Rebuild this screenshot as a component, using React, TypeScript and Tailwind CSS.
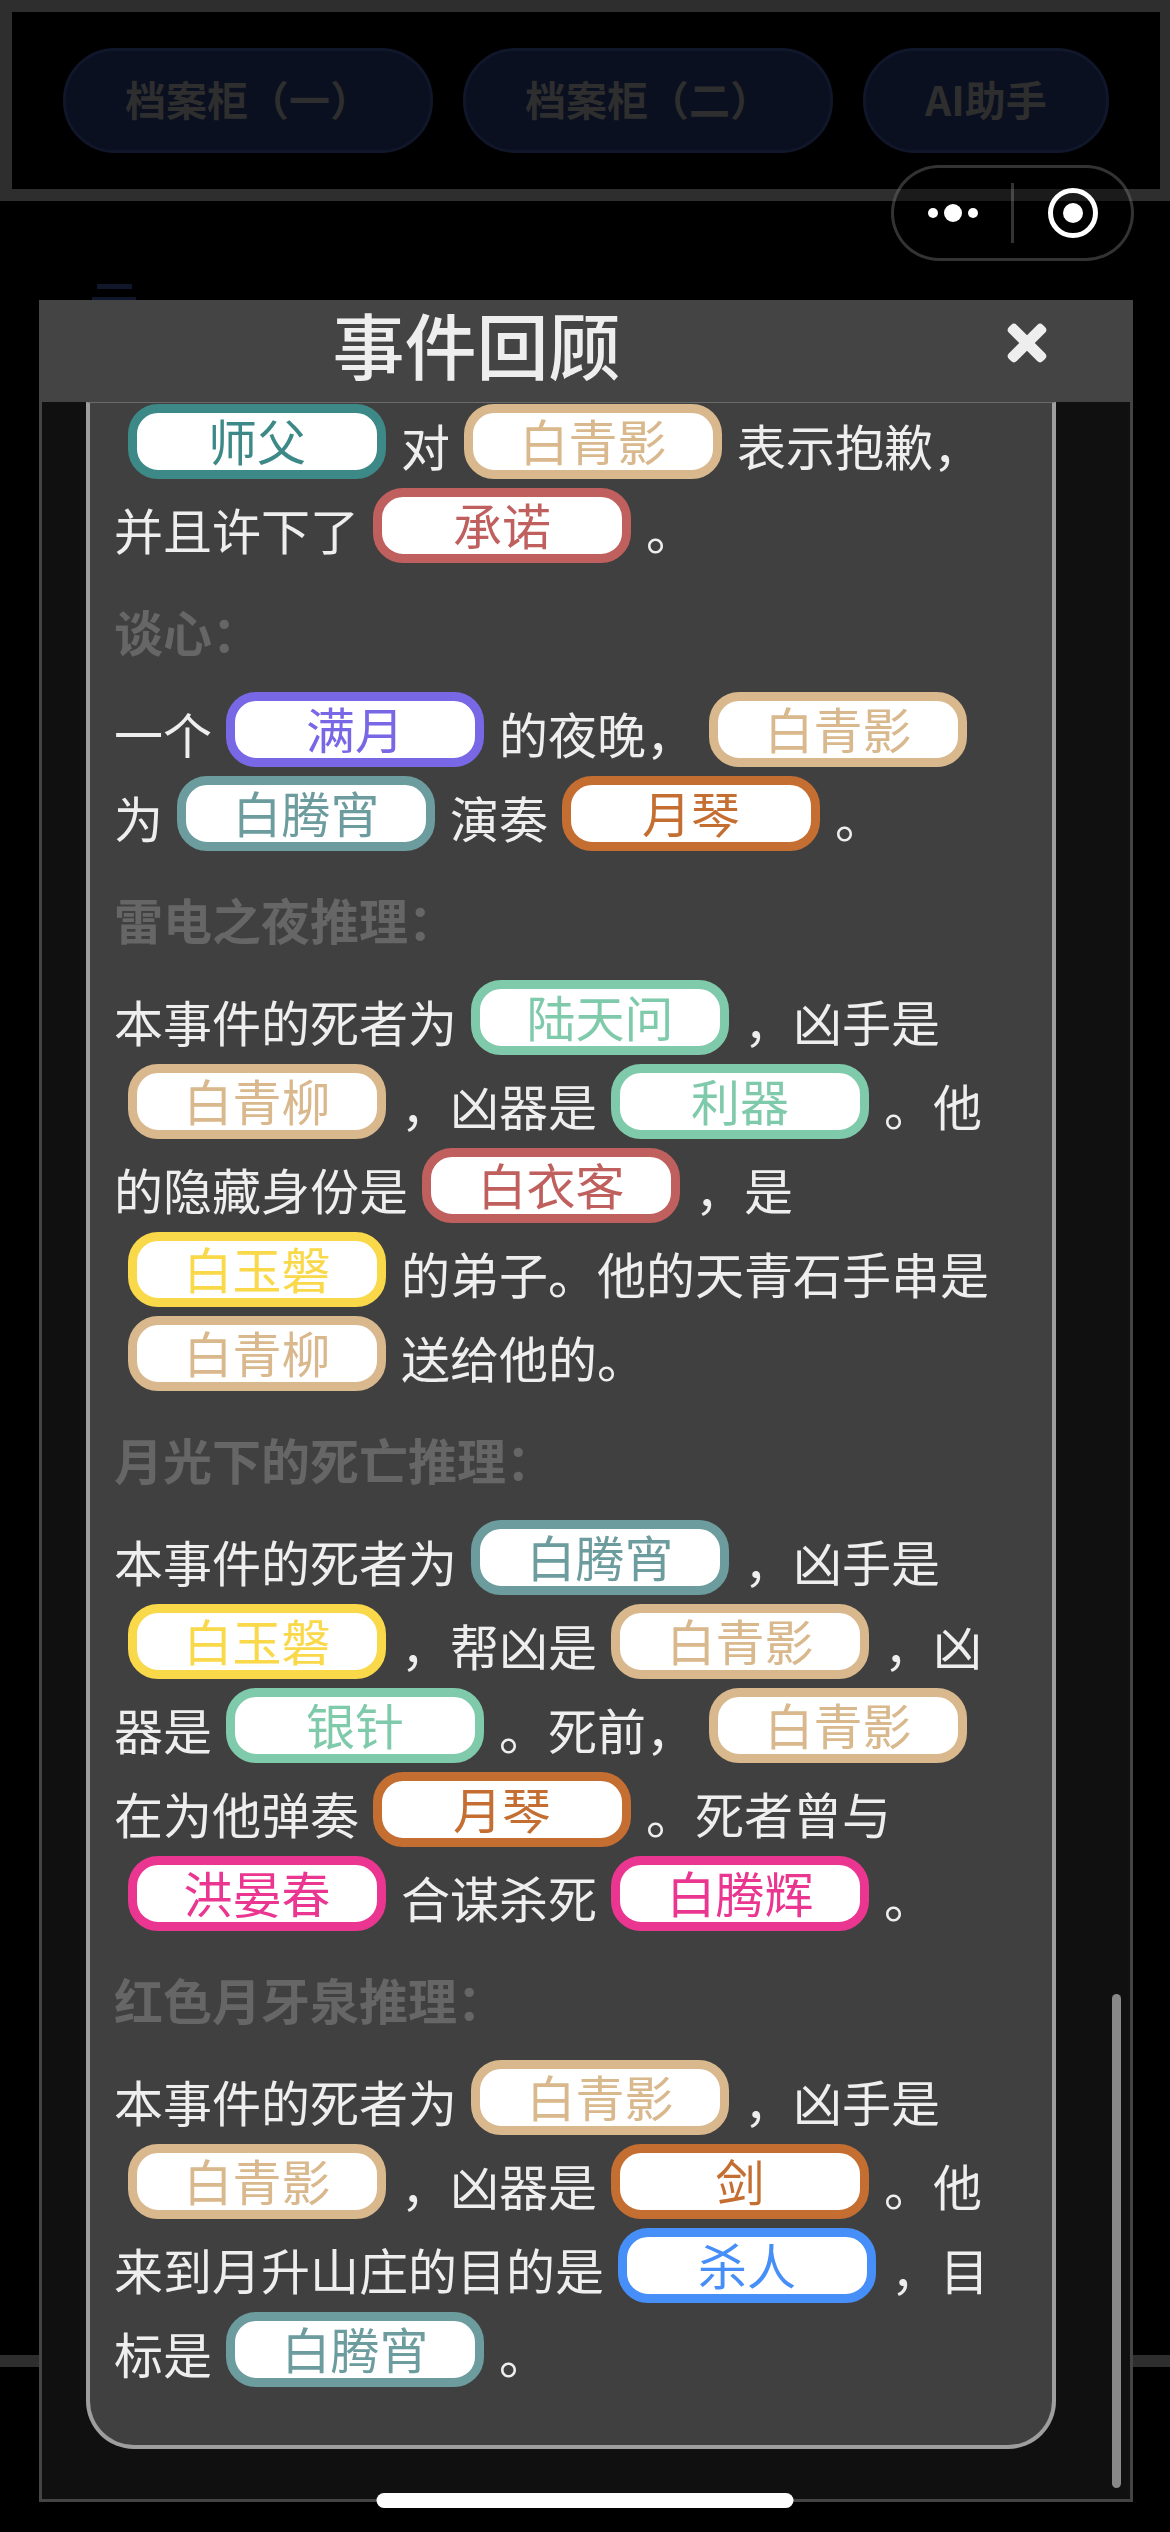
import { Fragment, useState } from "react";

const tones = {
  teal: "border-[#3c8987] text-[#3c8987]",
  tan: "border-[#d8b88c] text-[#d8b88c]",
  red: "border-[#c0605e] text-[#c0605e]",
  purple: "border-[#7868e6] text-[#7868e6]",
  cadet: "border-[#6c9c9e] text-[#6c9c9e]",
  orange: "border-[#c46e32] text-[#c46e32]",
  green: "border-[#80caac] text-[#80caac]",
  yellow: "border-[#f9d849] text-[#f9d849]",
  pink: "border-[#ea3690] text-[#ea3690]",
  blue: "border-[#468ff8] text-[#468ff8]",
};

type Tone = keyof typeof tones;
// plain string = text, tuple = answer
type Part = string | [string, Tone];

const events: { title?: string; parts: Part[] }[] = [
  {
    parts: [
      ["师父", "teal"],
      "对",
      ["白青影", "tan"],
      "表示抱歉，并且许下了",
      ["承诺", "red"],
      "。",
    ],
  },
  {
    title: "谈心：",
    parts: [
      "一个",
      ["满月", "purple"],
      "的夜晚，",
      ["白青影", "tan"],
      "为",
      ["白腾宵", "cadet"],
      "演奏",
      ["月琴", "orange"],
      "。",
    ],
  },
  {
    title: "雷电之夜推理：",
    parts: [
      "本事件的死者为",
      ["陆天问", "green"],
      "，凶手是",
      ["白青柳", "tan"],
      "，凶器是",
      ["利器", "green"],
      "。他的隐藏身份是",
      ["白衣客", "red"],
      "，是",
      ["白玉磐", "yellow"],
      "的弟子。他的天青石手串是",
      ["白青柳", "tan"],
      "送给他的。",
    ],
  },
  {
    title: "月光下的死亡推理：",
    parts: [
      "本事件的死者为",
      ["白腾宵", "cadet"],
      "，凶手是",
      ["白玉磐", "yellow"],
      "，帮凶是",
      ["白青影", "tan"],
      "，凶器是",
      ["银针", "green"],
      "。死前，",
      ["白青影", "tan"],
      "在为他弹奏",
      ["月琴", "orange"],
      "。死者曾与",
      ["洪晏春", "pink"],
      "合谋杀死",
      ["白腾辉", "pink"],
      "。",
    ],
  },
  {
    title: "红色月牙泉推理：",
    parts: [
      "本事件的死者为",
      ["白青影", "tan"],
      "，凶手是",
      ["白青影", "tan"],
      "，凶器是",
      ["剑", "orange"],
      "。他来到月升山庄的目的是",
      ["杀人", "blue"],
      "，目标是",
      ["白腾宵", "cadet"],
      "。",
    ],
  },
];

const tabs = ["档案柜（一）", "档案柜（二）", "AI助手"];

function Answer({ text, tone }: { text: string; tone: Tone }) {
  return (
    <span
      className={`mr-[15px] ml-[14px] inline-flex h-[75px] w-[258px] items-center justify-center rounded-[30px] border-9 bg-white pb-1 align-[5px] leading-[53px] ${tones[tone]}`}
    >
      {text}
    </span>
  );
}

function Backdrop() {
  return (
    <div className="col-start-1 row-start-1 flex flex-col">
      <nav className="flex gap-[30px] border-12 border-[#2e2e2e] px-[51px] py-9">
        {tabs.map((tab) => (
          <button
            key={tab}
            type="button"
            className="h-[105px] rounded-[52px] border-3 border-[#11172a] bg-[#0b1020] px-[59px] pb-1 text-[41px] font-bold whitespace-nowrap text-[#2e2e2e]"
          >
            {tab}
          </button>
        ))}
      </nav>
      <div className="flex-1 border-b-12 border-[#2e2e2e] px-[92px] pt-[83px]">
        <svg viewBox="0 0 44 36" className="h-9 w-11 fill-[#11172a]">
          <rect x="5" width="35" height="5" />
          <rect y="13" width="44" height="5" />
          <rect x="5" y="27" width="35" height="5" />
        </svg>
      </div>
      <div className="h-[165px]" />
    </div>
  );
}

function ReviewDialog({ onClose }: { onClose: () => void }) {
  return (
    <section
      role="dialog"
      aria-labelledby="review-title"
      className="relative col-start-1 row-start-1 mx-[39px] mt-[300px] mb-[30px] flex flex-col border-3 border-t-0 border-[#444] bg-[#101010]"
    >
      <header className="-mx-[3px] flex h-[102px] items-center bg-[#444] pb-4 text-[#eee]">
        <h1
          id="review-title"
          className="w-4/5 text-center text-[72px] leading-[84px] font-medium"
        >
          事件回顾
        </h1>
        <button
          type="button"
          aria-label="关闭"
          onClick={onClose}
          className="flex h-full w-1/5 items-center justify-center pl-2"
        >
          <svg viewBox="0 0 40 40" className="size-10 fill-current">
            <rect x="-4" y="14.5" width="48" height="11" rx="4" transform="rotate(45 20 20)" />
            <rect x="-4" y="14.5" width="48" height="11" rx="4" transform="rotate(-45 20 20)" />
          </svg>
        </button>
      </header>
      <div className="mr-[74px] mb-[50px] ml-11 flex-1 rounded-b-[48px] border-4 border-t border-[#9e9e9e] border-t-[#6a6a6a] bg-[#404040] px-6 pb-[50px] text-[49px] leading-[84px] text-[#eee]">
        {events.map((event, i) => (
          <Fragment key={i}>
            {event.title && (
              <h2 className="leading-[120px] font-bold text-[#666]">
                {event.title}
              </h2>
            )}
            <p>
              {event.parts.map((part, j) =>
                typeof part === "string" ? (
                  part
                ) : (
                  <Answer key={j} text={part[0]} tone={part[1]} />
                ),
              )}
            </p>
          </Fragment>
        ))}
      </div>
      {/* scroll thumb */}
      <div className="absolute right-[9px] bottom-[11px] h-[494px] w-[9px] rounded-full bg-[#888]" />
    </section>
  );
}

function Capsule() {
  return (
    <div className="absolute top-[165px] right-9 flex h-24 w-[243px] items-center rounded-full border-3 border-white/20 bg-black/40">
      <button
        type="button"
        aria-label="更多"
        className="flex flex-1 items-center justify-center gap-[6px]"
      >
        <span className="size-[10px] rounded-full bg-white" />
        <span className="size-[18px] rounded-full bg-white" />
        <span className="size-[10px] rounded-full bg-white" />
      </button>
      <span className="h-[60px] w-[3px] bg-white/20" />
      <button
        type="button"
        aria-label="退出"
        className="flex flex-1 items-center justify-center"
      >
        <span className="flex size-[50px] items-center justify-center rounded-full border-5 border-white">
          <span className="size-5 rounded-full bg-white" />
        </span>
      </button>
    </div>
  );
}

export default function App() {
  const [open, setOpen] = useState(true);

  return (
    <main
      lang="zh-CN"
      className="relative grid min-h-screen overflow-hidden bg-black font-['Noto_Sans_CJK_SC',sans-serif]"
    >
      <Backdrop />
      {open && <ReviewDialog onClose={() => setOpen(false)} />}
      <Capsule />
      {/* home indicator */}
      <div className="absolute bottom-6 left-1/2 h-[15px] w-[417px] -translate-x-1/2 rounded-full bg-[#fdfdfd]" />
    </main>
  );
}
